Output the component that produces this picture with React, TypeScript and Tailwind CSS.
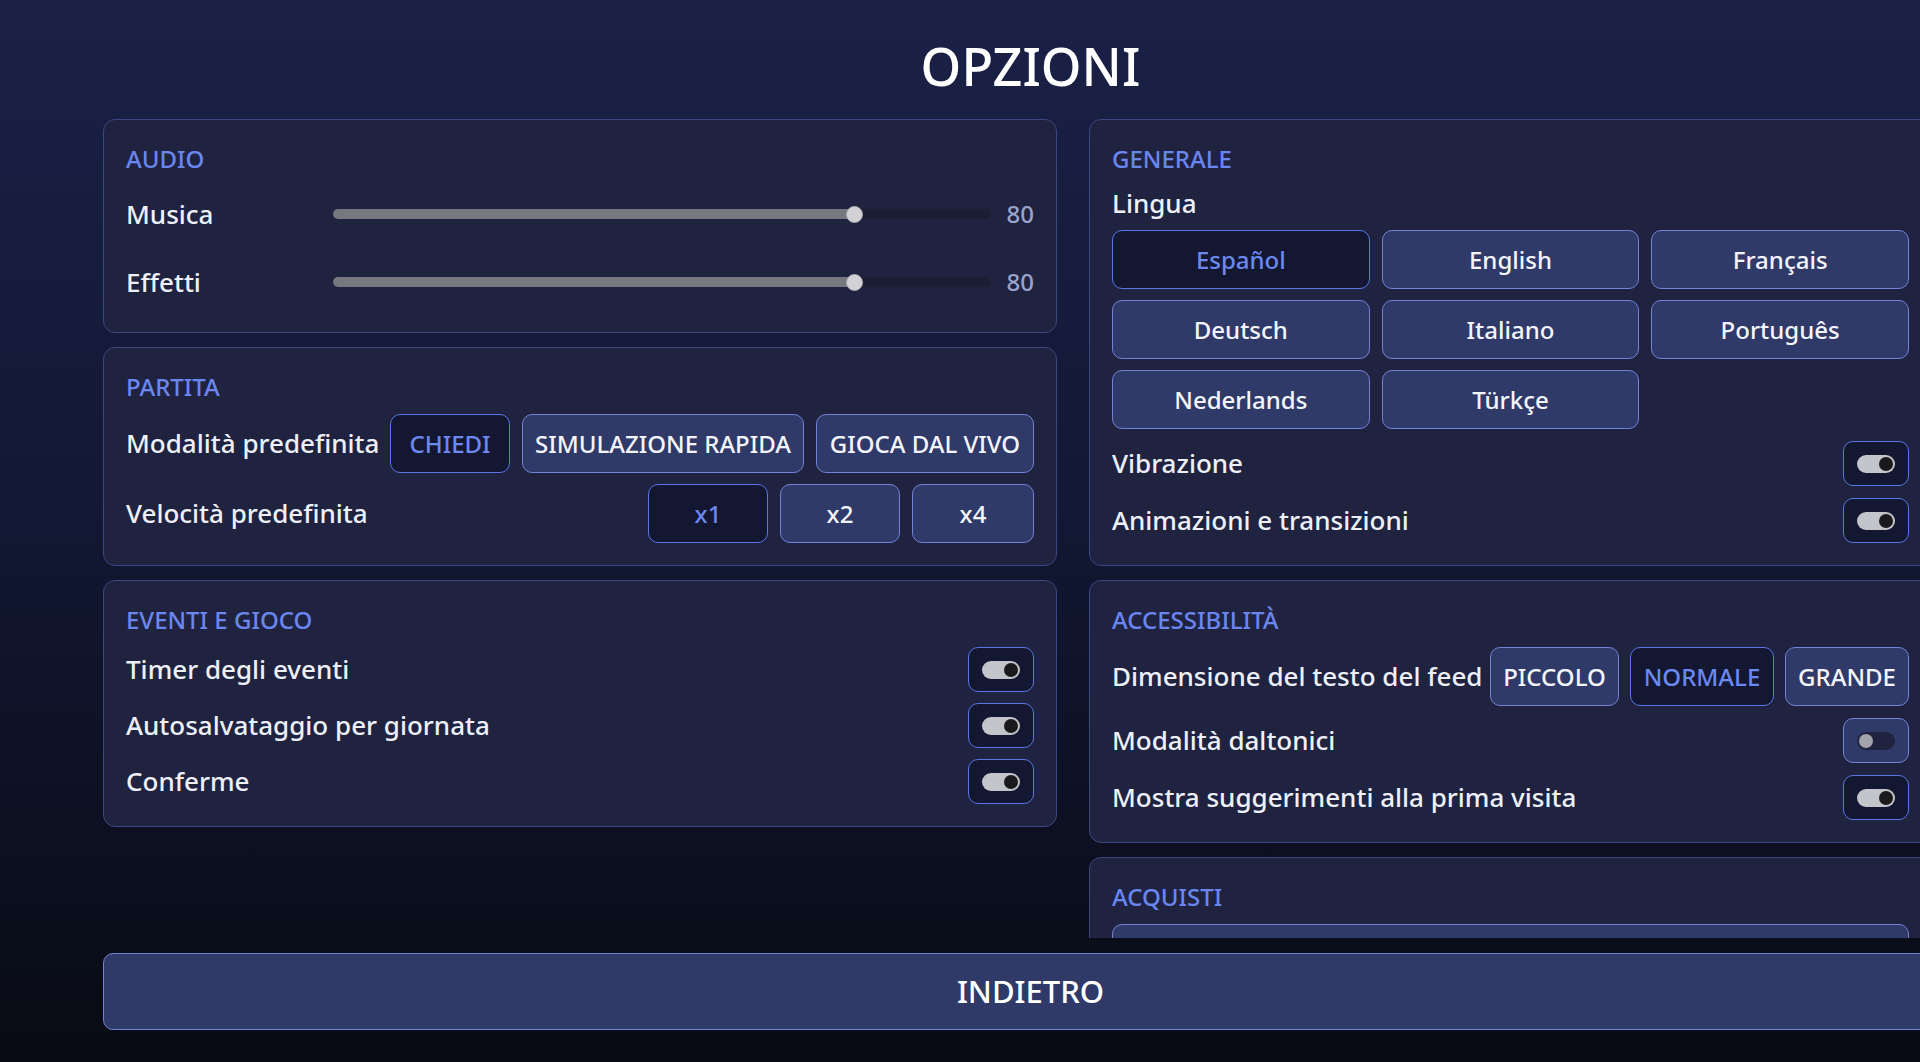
import React from "react";

const FONT = { fontFamily: '"Noto Sans", "Open Sans", sans-serif' };

function Panel({ title, children }: { title: string; children?: React.ReactNode }) {
  return (
    <div className="shrink-0 rounded-[12px] border border-[#3b4780] bg-[#1f2340] px-[22px] pt-6 pb-[22px] flex flex-col gap-3">
      <div className="text-[24px] leading-[30px] text-[#6b86ef]">{title}</div>
      {children}
    </div>
  );
}

function Slider({ label, value }: { label: string; value: number }) {
  const pct = value / 100;
  return (
    <div className="flex items-center h-[56px]">
      <div className="w-[207px] text-[26px] text-[#eef0f8]">{label}</div>
      <div className="relative flex-1 h-[17px] flex items-center">
        <div className="absolute inset-x-0 h-[10px] rounded-full bg-[#1c1f33]" />
        <div
          className="absolute left-0 h-[10px] rounded-full bg-[#76777f]"
          style={{ width: `calc(${pct * 100}% - ${pct * 17}px + 8px)` }}
        />
        <div
          className="absolute w-[17px] h-[17px] rounded-full bg-[#d2d2d6] border border-[#a8a8b0]"
          style={{ left: `calc(${pct * 100}% - ${pct * 17}px)` }}
        />
      </div>
      <div className="ml-[15px] w-[28px] text-right text-[24px] text-[#9aa3cc]">{value}</div>
    </div>
  );
}

function Btn({
  children,
  selected,
  className = "",
  size = "text-[24px]",
}: {
  children?: React.ReactNode;
  selected?: boolean;
  className?: string;
  size?: string;
}) {
  return (
    <div
      className={
        "h-[59px] shrink-0 flex items-center justify-center rounded-[10px] border-[1.5px] whitespace-nowrap " +
        size +
        " " +
        (selected
          ? "bg-[#131731] border-[#5a76e6] text-[#6c88f1]"
          : "bg-[#2f3a69] border-[#7282d6] text-[#f4f5fb]") +
        " " +
        className
      }
    >
      {children}
    </div>
  );
}

function Toggle({ on }: { on: boolean }) {
  return (
    <div
      className={
        "w-[66px] h-[45px] rounded-[10px] border-[1.5px] flex items-center justify-center shrink-0 " +
        (on ? "bg-[#131731] border-[#5a76e6]" : "bg-[#2f3a69] border-[#7282d6]")
      }
    >
      <div
        className={
          "w-[38px] h-[18px] rounded-full flex items-center px-[2px] " +
          (on ? "bg-[#c4c4cb] justify-end" : "bg-[#1f2340] justify-start")
        }
      >
        <div className={"w-[14px] h-[14px] rounded-full " + (on ? "bg-[#1a1a1c]" : "bg-[#a3a3ab]")} />
      </div>
    </div>
  );
}

function ToggleRow({ label, on }: { label: string; on: boolean }) {
  return (
    <div className="flex items-center justify-between h-[45px]">
      <div className="text-[26px] text-[#eef0f8]">{label}</div>
      <Toggle on={on} />
    </div>
  );
}

export default function App() {
  const langs = [
    "Español",
    "English",
    "Français",
    "Deutsch",
    "Italiano",
    "Português",
    "Nederlands",
    "Türkçe",
  ];
  return (
    <div
      className="w-full h-[1062px] overflow-hidden bg-gradient-to-b from-[#1b2147] via-[#121733] to-[#080b14] font-medium"
      style={FONT}
    >
      <div className="ml-[103px] w-[1855px] flex flex-col">
        <div className="h-[119px] pt-[40px] text-center text-[52px] leading-none font-medium text-white">
          OPZIONI
        </div>
        <div className="flex gap-[32px] h-[819px]">
          <div className="w-[954px] shrink-0 flex flex-col gap-[14px]">
            <Panel title="AUDIO">
              <Slider label="Musica" value={80} />
              <Slider label="Effetti" value={80} />
            </Panel>
            <Panel title="PARTITA">
              <div className="flex items-center justify-between">
                <div className="text-[26px] text-[#eef0f8] whitespace-nowrap">Modalità predefinita</div>
                <div className="flex gap-3">
                  <Btn selected className="w-[120px]">CHIEDI</Btn>
                  <Btn className="w-[282px]">SIMULAZIONE RAPIDA</Btn>
                  <Btn className="w-[218px]">GIOCA DAL VIVO</Btn>
                </div>
              </div>
              <div className="flex items-center justify-between -mt-px">
                <div className="text-[26px] text-[#eef0f8]">Velocità predefinita</div>
                <div className="flex gap-3">
                  <Btn selected className="w-[120px]">x1</Btn>
                  <Btn className="w-[120px]">x2</Btn>
                  <Btn className="w-[122px]">x4</Btn>
                </div>
              </div>
            </Panel>
            <Panel title="EVENTI E GIOCO">
              <div className="flex flex-col gap-[11px]">
                <ToggleRow label="Timer degli eventi" on />
                <ToggleRow label="Autosalvataggio per giornata" on />
                <ToggleRow label="Conferme" on />
              </div>
            </Panel>
          </div>
          <div className="flex-1 overflow-hidden flex flex-col">
            <div className="w-[843px] flex flex-col gap-[14px]">
              <Panel title="GENERALE">
                <div className="text-[26px] leading-[32px] text-[#eef0f8] mt-px -mb-px">Lingua</div>
                <div className="grid grid-cols-3 gap-x-3 gap-y-[11px]">
                  {langs.map((l, i) => (
                    <Btn key={l} selected={i === 0} size="text-[24px]">
                      {l}
                    </Btn>
                  ))}
                </div>
                <ToggleRow label="Vibrazione" on />
                <ToggleRow label="Animazioni e transizioni" on />
              </Panel>
              <Panel title="ACCESSIBILITÀ">
                <div className="flex items-center justify-between">
                  <div className="text-[26px] text-[#eef0f8] whitespace-nowrap">Dimensione del testo del feed</div>
                  <div className="flex gap-[11px]">
                    <Btn className="w-[129px]">PICCOLO</Btn>
                    <Btn selected className="w-[144px]">NORMALE</Btn>
                    <Btn className="w-[124px]">GRANDE</Btn>
                  </div>
                </div>
                <ToggleRow label="Modalità daltonici" on={false} />
                <ToggleRow label="Mostra suggerimenti alla prima visita" on />
              </Panel>
              <Panel title="ACQUISTI">
                <Btn className="w-full" />
              </Panel>
            </div>
          </div>
        </div>
        <div className="mt-[15px] h-[77px] w-full rounded-[10px] border-[1.5px] border-[#7282d6] bg-[#2f3a69] flex items-center justify-center text-[31px] text-white">
          INDIETRO
        </div>
      </div>
    </div>
  );
}
